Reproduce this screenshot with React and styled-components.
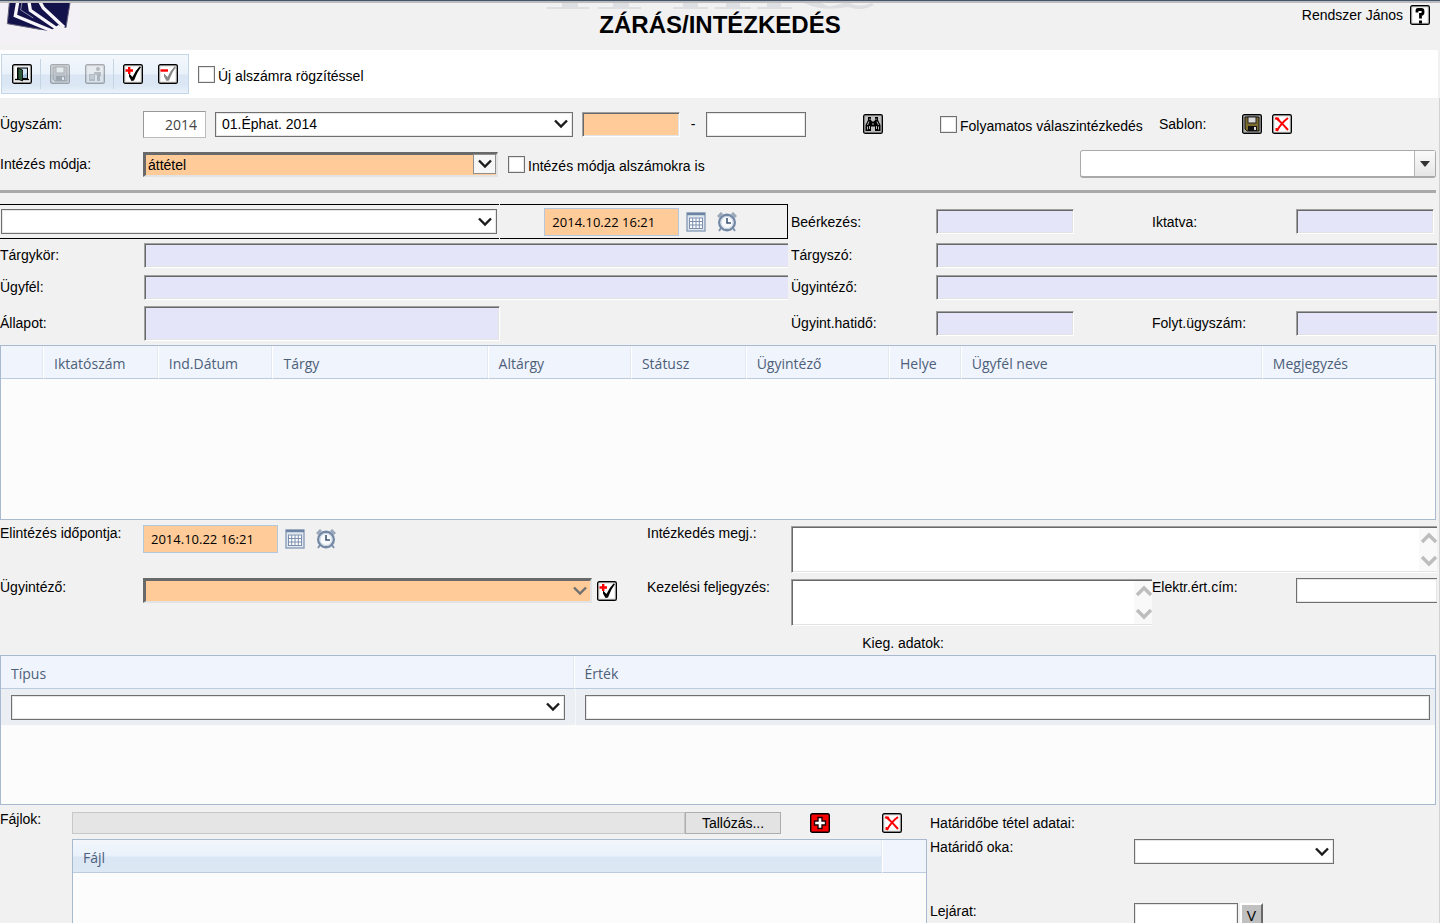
import React from "react";
import styled, { createGlobalStyle, css } from "styled-components";

const GlobalStyle = createGlobalStyle`
  *, *::before, *::after { box-sizing: border-box; }
  html, body { margin: 0; padding: 0; background: #f1f1f1; }
  body { overflow: hidden; }
  body, button, input, select, textarea {
    font-family: "Liberation Sans", Arial, sans-serif;
    font-size: 14px;
    line-height: 16px;
    color: #000;
  }
  button, input, select, textarea { margin: 0; border-radius: 0; outline: none; }
`;

/* ---------- page frame ---------- */

const Page = styled.div`
  height: 100vh;
  overflow: hidden;
  display: flex;
  flex-direction: column;
  border-top: 1px solid #44546b;
  background: #f1f1f1;
`;

const Header = styled.header`
  flex: none;
  height: 49px;
  border-top: 2px solid #bcbcbf;
  display: grid;
  grid-template-columns: 1fr auto 1fr;
  background: #f1f1f1;
`;

const LogoBox = styled.div`
  width: 80px;
  height: 41px;
  background: #f3f1f5;
`;

const TitleBlock = styled.div`
  display: flex;
  flex-direction: column;
  align-items: center;
`;

const Title = styled.h1`
  margin: 2px 0 0;
  font-size: 24px;
  line-height: 28px;
  font-weight: bold;
`;

const UserBox = styled.div`
  display: flex;
  justify-content: flex-end;
  align-items: flex-start;
  gap: 7px;
  padding: 2px 10px 0 0;
  line-height: 20px;
`;

const Toolbar = styled.div`
  flex: none;
  height: 48px;
  margin-right: 2px;
  padding: 4px 1px;
  background: #fff;
  display: flex;
  align-items: center;
  gap: 9px;
`;

const ToolGroup = styled.div`
  height: 40px;
  padding: 0 10px;
  border: 1px solid #c3d5e8;
  background: linear-gradient(#f4f8fc 0, #e9f1fa 19px, #dae6f4 20px, #dbe7f4 30px, #eaf2fa 100%);
  display: flex;
  align-items: center;
  gap: 15px;
`;

const ToolPart = styled.div`
  display: flex;
  align-items: center;
  gap: 15px;
  & + & {
    border-left: 1px solid #c6d5e4;
    padding: 5px 0 5px 9px;
    margin-left: -7px;
  }
`;

const Main = styled.main`
  flex: 1;
  min-height: 0;
  overflow: hidden;
  padding-right: 2px;
  border-right: 1px solid #d2d2d4;
`;

/* ---------- controls ---------- */

const IconButton = styled.button`
  flex: none;
  width: 20px;
  height: 20px;
  padding: 0;
  border: 0;
  background: none;
  display: block;
  opacity: ${(p) => (p.disabled ? 0.3 : 1)};
  filter: ${(p) => (p.disabled ? "grayscale(1)" : "none")};
  svg { display: block; }
`;

const sunken = css`
  border: 1px solid;
  border-color: #a0a0a0 #fff #fff #a0a0a0;
  box-shadow: inset 1px 1px 0 #696969, inset -1px -1px 0 #e3e3e3;
`;

const clippedEdge = css`
  border-right: 0;
  box-shadow: inset 1px 1px 0 #696969, inset 0 -1px 0 #e3e3e3;
`;

const flat = css`
  border: 1px solid #707070;
  box-shadow: inset 0 0 0 1px #e6e6e6;
`;

const Field = styled.input`
  min-width: 0;
  width: ${(p) => (p.$w ? `${p.$w}px` : "100%")};
  height: ${(p) => p.$h || 25}px;
  padding: 0 8px;
  background: ${(p) => p.$bg || "#fff"};
  ${(p) => (p.$sunken ? sunken : flat)}
  ${(p) => p.$cut && (p.$sunken ? clippedEdge : "border-right: 0;")}
`;

const YearField = styled(Field)`
  font-family: "Open Sans", "Noto Sans", sans-serif;
  color: #444;
  text-align: right;
  border-color: #999 #bbb #bbb #999;
  box-shadow: none;
`;

const DateField = styled.input`
  width: 135px;
  height: 28px;
  padding: 0 7px;
  border: 1px solid #b5c7de;
  background: #ffcb98;
  font-family: "Open Sans", "Noto Sans", sans-serif;
  font-size: 13px;
`;

const Check = styled.input`
  appearance: none;
  flex: none;
  width: 17px;
  height: 17px;
  background: #fff;
  ${flat}
`;

const CheckLabel = styled.label`
  display: flex;
  align-items: center;
  gap: 3px;
  white-space: nowrap;
`;

const CheckText = styled.span`
  padding-top: 4px;
`;

const SelectShell = styled.span`
  display: grid;
  align-items: center;
  min-width: 0;
  width: ${(p) => (p.$w ? `${p.$w}px` : "auto")};
  flex: ${(p) => (p.$grow ? "1" : "none")};
  > * { grid-area: 1 / 1; }
  > svg { justify-self: end; margin-right: 4px; pointer-events: none; }
`;

const SelectBox = styled.select`
  appearance: none;
  width: 100%;
  min-width: 0;
  height: 25px;
  padding: 0 6px;
  background: #fff;
  ${flat}
  ${(p) =>
    p.$orange &&
    css`
      padding: 0 2px;
      background: #ffcb98;
      border: 3px solid;
      border-width: 3px 2px 2px 3px;
      border-color: #696969 #e3e3e3 #e3e3e3 #696969;
      box-shadow: none;
    `}
`;

const ArrowBox = styled.span`
  justify-self: end;
  width: 23px;
  height: 20px;
  margin-right: 2px;
  border: 1px solid #8f8f8f;
  background: #f6f6f6;
  display: grid;
  place-items: center;
  pointer-events: none;
`;

const ComboShell = styled(SelectShell)`
  select {
    height: 28px;
    border: 1px solid #aaa;
    border-bottom-width: 2px;
    border-radius: 3px;
    box-shadow: none;
  }
`;

const ComboArrow = styled.span`
  justify-self: end;
  width: 21px;
  height: 25px;
  margin: 0 1px 1px 0;
  border-left: 1px solid #b5b5b5;
  background: linear-gradient(#fafafa, #e6e6e6);
  display: grid;
  place-items: center;
  pointer-events: none;
`;

const NoteShell = styled.span`
  flex: 1;
  min-width: 0;
  display: grid;
  margin: 1px 0 0 -1px;
  > * { grid-area: 1 / 1; }
`;

const Note = styled.textarea`
  width: 100%;
  height: 47px;
  resize: none;
  overflow: hidden;
  background: #fff;
  ${sunken}
  ${clippedEdge}
`;

const NoteScroll = styled.span`
  justify-self: end;
  width: 18px;
  height: 43px;
  margin: 2px 0;
  padding: 4px 0;
  overflow: hidden;
  background: #f9f9f9;
  display: flex;
  flex-direction: column;
  justify-content: space-between;
  align-items: center;
`;

/* ---------- form rows ---------- */

const Label = styled.label`
  white-space: nowrap;
`;

const FilterRow = styled.div`
  height: 40px;
  display: grid;
  align-items: center;
  grid-template-columns: ${(p) => p.$cols};
`;

const Filters = styled.section`
  padding-top: 6px;
  border-bottom: 3px solid #aaa;
  margin-right: 1px;
  height: 95px;
`;

const Inline = styled.div`
  display: flex;
  align-items: center;
  gap: ${(p) => p.$gap || 9}px;
  padding-right: ${(p) => p.$pr || 0}px;
  min-width: 0;
`;

const Dash = styled.span`
  width: 8px;
  text-align: center;
`;

const Details = styled.section`
  margin-top: 11px;
  padding-bottom: 2px;
`;

const DetailRow = styled.div`
  height: ${(p) => p.$h || 32}px;
  display: grid;
  align-items: center;
  grid-template-columns: 144fr 647fr 145fr 216fr 144fr 141fr;
`;

const Wide = styled.div`
  grid-column: span ${(p) => p.$span};
  min-width: 0;
  display: flex;
  padding-right: ${(p) => p.$pr || 0}px;
`;

const StatusField = styled(Field)`
  width: 55%;
`;

const BlackBox = styled.div`
  grid-column: span 2;
  height: 35px;
  margin-right: 3px;
  display: grid;
  grid-template-columns: 500fr 288fr;
  gap: 1px;
`;

const BlackCell = styled.div`
  border: 1px solid #000;
  border-width: ${(p) => (p.$last ? "1px 1px 1px 0" : "1px 0")};
  padding: ${(p) => (p.$last ? "0 0 0 44px" : "0 2px 0 1px")};
  display: flex;
  align-items: center;
  gap: ${(p) => (p.$last ? 7 : 0)}px;
`;

const PickerIcons = styled.span`
  display: flex;
  align-items: center;
  gap: 11px;
`;

const ActionRow = styled.div`
  height: ${(p) => p.$h}px;
  padding-top: ${(p) => p.$pt || 0}px;
  display: grid;
  align-items: start;
  grid-template-columns: 143fr 504fr 145fr 360fr 144fr 141fr;
  > label { padding-top: ${(p) => p.$lp || 0}px; }
`;

const Caption = styled.div`
  padding-left: 60%;
  line-height: 20px;
  height: 22px;
`;

/* ---------- data grids ---------- */

const GridFrame = styled.div`
  height: ${(p) => p.$h}px;
  margin-right: ${(p) => (p.$flush ? 0 : 1)}px;
  border: 1px solid #a9bad0;
  background: #fcfcfc;
`;

const GridTable = styled.table`
  width: 100%;
  border-collapse: separate;
  border-spacing: 0;
  table-layout: fixed;
`;

const Th = styled.th`
  height: 33px;
  padding: 3px 10px 0;
  width: ${(p) => p.$w || "auto"};
  text-align: left;
  font-family: "Open Sans", "Noto Sans", sans-serif;
  font-weight: normal;
  color: #4c607a;
  white-space: nowrap;
  background: ${(p) =>
    p.$active
      ? "linear-gradient(#f3f7fc 0, #e9f1fb 16px, #dbe6f4 17px, #dde8f5 100%)"
      : "#f0f4fc"};
  border-bottom: 1px solid #bccbde;
  border-right: 1px solid #fff;
  box-shadow: inset -1px 0 0 #e3e9f2;
  &:last-child { border-right: 0; box-shadow: none; }
`;

const Td = styled.td`
  height: 36px;
  padding: ${(p) => (p.$last ? "0 5px 0 9px" : "0 10px")};
  background: #ebeef3;
  & + & { border-left: 1px solid #f6f8fa; }
`;

/* ---------- files and deadlines ---------- */

const Bottom = styled.section`
  display: grid;
  grid-template-columns: 72fr 855fr 510fr;
`;

const FileLabel = styled.label`
  padding-top: 6px;
`;

const FileRow = styled.div`
  height: 34px;
  padding: 2px 25px 0 0;
  display: flex;
  align-items: center;
`;

const PathField = styled.input`
  flex: 1;
  min-width: 0;
  height: 22px;
  border: 1px solid #c8c8c8;
  background: #e5e5e5;
`;

const Browse = styled.button`
  width: 96px;
  height: 22px;
  border: 1px solid #adadad;
  background: #e3e3e3;
  padding: 0;
`;

const FileActions = styled.span`
  margin-left: 29px;
  display: flex;
  gap: 52px;
`;

const Deadline = styled.div`
  padding: 10px 0 0 3px;
  display: grid;
  grid-template-columns: 204fr 303fr;
  grid-template-rows: 24px 64px 25px;
  align-items: start;
`;

const DeadlineTitle = styled.div`
  grid-column: span 2;
`;

const Raised = styled.button`
  width: 23px;
  height: 25px;
  padding: 0;
  border: 2px solid;
  border-color: #fff #696969 #696969 #fff;
  background: #c0c0c0;
`;

/* ---------- drawings ---------- */

const Svg = ({ children }) => (
  <svg width="20" height="20" viewBox="0 0 20 20" aria-hidden="true">
    {children}
  </svg>
);

const Tile = ({ fill = "#fff" }) => (
  <>
    <rect x="0.7" y="0.7" width="18.6" height="18.6" rx="1.6" fill={fill} stroke="#000" strokeWidth="1.4" />
    <rect x="1.9" y="1.9" width="16.200" height="16.200" fill="none" stroke="#999" strokeWidth="1" opacity=".5" />
  </>
);

const Chevron = ({ color = "#1c1c1c" }) => (
  <svg width="16" height="12" viewBox="0 0 16 12" aria-hidden="true">
    <path d="M2 2.500 L8 8.500 L14 2.500" fill="none" stroke={color} strokeWidth="2.4" />
  </svg>
);

const ScrollArrow = ({ up }) => (
  <svg width="18" height="12" viewBox="0 0 18 12" aria-hidden="true">
    <path d={up ? "M3 10 L10 3 L17 10" : "M3 2 L10 9 L17 2"} fill="none" stroke="#bdbdbd" strokeWidth="3.4" />
  </svg>
);

const Logo = () => (
  <svg width="80" height="41" viewBox="0 9 240 123" aria-hidden="true">
    <path d="M28 9 L210 9 L198 83 L178 78 L150 94 L22 71 Z" fill="#14124a" />
    <path d="M28 9 L22 71 L125 89" fill="none" stroke="#66647e" strokeWidth="3" />
    <path d="M210 9 L198 83" fill="none" stroke="#66647e" strokeWidth="3" />
    <path d="M53 6 L46 47 L156 93 M87 6 L91 31 L172 87 M120 6 L130 24 L192 82" fill="none" stroke="#f8f6fa" strokeWidth="10" />
    <path d="M66 6 L62 30 L100 54" fill="none" stroke="#c9c7d6" strokeWidth="2" />
    <path d="M150 94 L176 74 L186 82 L168 96 Z" fill="#f3f1f5" />
  </svg>
);

const Banner = () => (
  <svg width="350" height="6" viewBox="0 0 350 6" aria-hidden="true">
    <g fill="#dddfe2">
      <path d="M2 4h42v2H2zM17 0h16v5H17zM53 4h43v2H53zM68 0h16v5H68zM128 4h35v2h-35zM138 0h15v5h-15zM170 4h36v2h-36zM181 0h14v5h-14zM212 4h35v2h-35zM222 0h14v5h-14z" />
      <path d="M259 0h18q5 5 15 2l6-2h7q8 5 22 0l2 2q-12 7-26 2-26 5-44-4z" />
    </g>
  </svg>
);

const HelpIcon = () => (
  <Svg>
    <Tile />
    <path d="M7 7.500 V5 Q7 4.500 8 4.500 H11.500 Q13 4.500 13 6 V7.500 Q13 9.500 10.500 9.500 V13.500" fill="none" stroke="#000" strokeWidth="2.800" />
    <rect x="9" y="15.500" width="3" height="3" fill="#000" />
  </Svg>
);

const DoorIcon = () => (
  <Svg>
    <Tile />
    <path d="M3 15.500 H17" stroke="#000" strokeWidth="1.400" />
    <rect x="5.500" y="4" width="10" height="10.500" fill="#9fbfdb" stroke="#000" />
    <path d="M10 5 H15 V9 L10 12 Z" fill="#d3e5f2" />
    <path d="M6 4 L10.500 6 V17 L6 15 Z" fill="#2f5a3c" stroke="#000" strokeWidth=".8" />
  </Svg>
);

const DiskIcon = () => (
  <Svg>
    <Tile fill="#b4b4b4" />
    <path d="M3 3 H17 V17 H5 L3 15 Z" fill="#7d6d2c" stroke="#111" />
    <rect x="6" y="3" width="8" height="6" fill="#d8d8d8" stroke="#222" strokeWidth="1" />
    <rect x="6" y="12" width="9" height="5" fill="#111" />
    <rect x="12" y="13" width="2" height="3" fill="#ddd" />
  </Svg>
);

const PersonIcon = () => (
  <Svg>
    <Tile fill="#ddd" />
    <rect x="4" y="10" width="6" height="7" fill="#555" />
    <path d="M5 12h4M5 14h4" stroke="#ccc" />
    <circle cx="13" cy="5" r="2" fill="#333" />
    <path d="M9 8 H16 V12 H15 V17 H12 V11 L9 10 Z" fill="#444" />
  </Svg>
);

const CheckIcon = ({ minus }) => (
  <Svg>
    <Tile />
    <path
      d="M6 9.500 L9.500 13 Q12 7 16.500 2.500 L18 3 Q13.500 9 11 16.500 L8.500 17 L6 12.500 Z"
      fill={minus ? "#8a8a8a" : "#000"}
    />
    <path d={minus ? "M2.500 6.500 H10" : "M2.500 6.500 H10 M6.200 3 V10"} stroke="#f00" strokeWidth="2.4" />
  </Svg>
);

const BinocularsIcon = () => (
  <Svg>
    <Tile fill="#c2c2c2" />
    <path d="M5 3h3v3l1 1.500h2l1-1.500V3h3v3l2.500 5v6h-5.500v-4.500h-4V17H2.500v-6l2.500-5z" fill="#000" />
    <path d="M6 7.500l-1.500 3.500M14 7.500l1.500 3.500M4.500 12.500v3M6.500 12v3M13.500 12v3M15.500 12.500v3M7 4.500v1.500M13 4.500v1.500M10 9v2" stroke="#c8c8c8" strokeWidth=".9" />
  </Svg>
);

const CrossIcon = () => (
  <Svg>
    <Tile />
    <path d="M4 4 Q9 8 16 16 M16 4 Q9 9 5 17" fill="none" stroke="#f00" strokeWidth="2" />
    <path d="M3 4.500 L6 4.500 L7 7 M4.500 14 L4.500 17" stroke="#f00" strokeWidth="2" fill="none" />
  </Svg>
);

const AddIcon = () => (
  <Svg>
    <rect x="0.7" y="0.7" width="18.6" height="18.6" rx="1.6" fill="#fb0000" stroke="#000" strokeWidth="1.4" />
    <path d="M8 4.500h4v3.500h3.500v4H12v3.500H8V12H4.500V8H8z" fill="#fff" stroke="#200" strokeWidth="1.4" />
  </Svg>
);

const CalendarIcon = () => (
  <Svg>
    <rect x="1" y="1" width="18" height="18" fill="#dfe7f0" stroke="#8a9db8" strokeWidth="1.4" />
    <path d="M1 2 H19" stroke="#6e84a5" strokeWidth="2.4" />
    <rect x="3.500" y="5.500" width="13" height="11" fill="#fff" />
    <path d="M3 6h14M3 9.500h14M3 13h14M3 16.500h14M3.500 6v11M6.700 6v11M10 6v11M13.300 6v11M16.500 6v11" stroke="#7c90ad" strokeWidth="1" />
  </Svg>
);

const ClockIcon = () => (
  <Svg>
    <path d="M1 5 L5 1 M15 1 L19 5" stroke="#9aa8b9" strokeWidth="3" />
    <path d="M4 16 L2 19 M16 16 L18 19" stroke="#8093ae" strokeWidth="2" />
    <circle cx="10" cy="10.500" r="7.800" fill="#f8fafc" stroke="#7388a5" strokeWidth="2.400" />
    <circle cx="10" cy="10.500" r="6" fill="none" stroke="#c6d2e0" strokeWidth="1" />
    <path d="M10 6 V11 H14" fill="none" stroke="#3f5676" strokeWidth="1.600" />
  </Svg>
);

/* ---------- composed parts ---------- */

const ORANGE = "#ffcb98";
const LILAC = "#e5e5fa";

function Select({ id, label, value, width, grow, orange, chevron, arrowBox }) {
  return (
    <SelectShell $w={width} $grow={grow}>
      <SelectBox id={id} aria-label={label} $orange={orange} defaultValue={value || ""}>
        <option>{value || ""}</option>
      </SelectBox>
      {arrowBox ? (
        <ArrowBox>
          <Chevron />
        </ArrowBox>
      ) : (
        <Chevron color={chevron} />
      )}
    </SelectShell>
  );
}

function DateTime({ id, label }) {
  return (
    <>
      <DateField id={id} aria-label={label} defaultValue="2014.10.22 16:21" />
      <PickerIcons>
        <IconButton aria-label="Naptár"><CalendarIcon /></IconButton>
        <IconButton aria-label="Időpont"><ClockIcon /></IconButton>
      </PickerIcons>
    </>
  );
}

function NoteField({ id }) {
  return (
    <NoteShell>
      <Note id={id} />
      <NoteScroll>
        <ScrollArrow up />
        <ScrollArrow />
      </NoteScroll>
    </NoteShell>
  );
}

const ReadOnly = (props) => <Field readOnly $sunken $bg={LILAC} {...props} />;

const CASE_COLUMNS = [
  ["", "3%"],
  ["Iktatószám", "8%"],
  ["Ind.Dátum", "8%"],
  ["Tárgy", "15%"],
  ["Altárgy", "10%"],
  ["Státusz", "8%"],
  ["Ügyintéző", "10%"],
  ["Helye", "5%"],
  ["Ügyfél neve", "21%"],
  ["Megjegyzés", "12%"],
];

export default function App() {
  return (
    <Page>
      <GlobalStyle />
      <Header>
        <LogoBox><Logo /></LogoBox>
        <TitleBlock>
          <Banner />
          <Title>ZÁRÁS/INTÉZKEDÉS</Title>
        </TitleBlock>
        <UserBox>
          <span>Rendszer János</span>
          <IconButton aria-label="Súgó"><HelpIcon /></IconButton>
        </UserBox>
      </Header>

      <Toolbar>
        <ToolGroup>
          <ToolPart>
            <IconButton aria-label="Kilépés"><DoorIcon /></IconButton>
          </ToolPart>
          <ToolPart>
            <IconButton aria-label="Mentés" disabled><DiskIcon /></IconButton>
            <IconButton aria-label="Törlés" disabled><PersonIcon /></IconButton>
          </ToolPart>
          <ToolPart>
            <IconButton aria-label="Hozzáadás"><CheckIcon /></IconButton>
            <IconButton aria-label="Elvétel"><CheckIcon minus /></IconButton>
          </ToolPart>
        </ToolGroup>
        <CheckLabel>
          <Check type="checkbox" />
          <CheckText>Új alszámra rögzítéssel</CheckText>
        </CheckLabel>
      </Toolbar>

      <Main>
        <Filters>
          <FilterRow $cols="143fr 720fr 77fr 219fr 83fr 194fr">
            <Label htmlFor="ugyszam">Ügyszám:</Label>
            <Inline $pr={57}>
              <YearField id="ugyszam" $w={63} $h={27} defaultValue="2014" />
              <Select label="Iktatókönyv" value="01.Éphat. 2014" grow />
              <Field aria-label="Főszám" $w={98} $bg={ORANGE} $sunken />
              <Dash>-</Dash>
              <Field aria-label="Alszám" $w={100} />
            </Inline>
            <IconButton aria-label="Keresés"><BinocularsIcon /></IconButton>
            <CheckLabel>
              <Check type="checkbox" />
              <CheckText>Folyamatos válaszintézkedés</CheckText>
            </CheckLabel>
            <Label htmlFor="sablon">Sablon:</Label>
            <Inline $gap={10}>
              <IconButton aria-label="Sablon mentése"><DiskIcon /></IconButton>
              <IconButton aria-label="Sablon törlése"><CrossIcon /></IconButton>
            </Inline>
          </FilterRow>
          <FilterRow $cols="143fr 355fr 10fr 572fr 356fr">
            <Label htmlFor="mod">Intézés módja:</Label>
            <Select id="mod" value="áttétel" orange arrowBox />
            <span />
            <CheckLabel>
              <Check type="checkbox" />
              <CheckText>Intézés módja alszámokra is</CheckText>
            </CheckLabel>
            <ComboShell>
              <SelectBox id="sablon" defaultValue="">
                <option />
              </SelectBox>
              <ComboArrow>
                <svg width="10" height="6" viewBox="0 0 10 6" aria-hidden="true">
                  <path d="M0 0h10L5 6z" fill="#333" />
                </svg>
              </ComboArrow>
            </ComboShell>
          </FilterRow>
        </Filters>

        <Details>
          <DetailRow $h={35}>
            <BlackBox>
              <BlackCell>
                <Select label="Előzmény" grow />
              </BlackCell>
              <BlackCell $last>
                <DateTime label="Időpont" />
              </BlackCell>
            </BlackBox>
            <Label htmlFor="beerkezes">Beérkezés:</Label>
            <ReadOnly id="beerkezes" $w={138} />
            <Label htmlFor="iktatva">Iktatva:</Label>
            <ReadOnly id="iktatva" $w={138} />
          </DetailRow>
          <DetailRow>
            <Label htmlFor="targykor">Tárgykör:</Label>
            <Wide $span={1} $pr={3}><ReadOnly id="targykor" $cut /></Wide>
            <Label htmlFor="targyszo">Tárgyszó:</Label>
            <Wide $span={3}><ReadOnly id="targyszo" $cut /></Wide>
          </DetailRow>
          <DetailRow>
            <Label htmlFor="ugyfel">Ügyfél:</Label>
            <Wide $span={1} $pr={3}><ReadOnly id="ugyfel" $cut /></Wide>
            <Label htmlFor="ugyintezo">Ügyintéző:</Label>
            <Wide $span={3}><ReadOnly id="ugyintezo" $cut /></Wide>
          </DetailRow>
          <DetailRow $h={40}>
            <Label htmlFor="allapot">Állapot:</Label>
            <StatusField id="allapot" readOnly $sunken $bg={LILAC} $h={35} />
            <Label htmlFor="hatarido">Ügyint.hatidő:</Label>
            <ReadOnly id="hatarido" $w={138} />
            <Label htmlFor="folyt">Folyt.ügyszám:</Label>
            <ReadOnly id="folyt" $cut />
          </DetailRow>
        </Details>

        <GridFrame $h={175}>
          <GridTable>
            <thead>
              <tr>
                {CASE_COLUMNS.map(([name, w]) => (
                  <Th key={name} $w={w}>{name}</Th>
                ))}
              </tr>
            </thead>
          </GridTable>
        </GridFrame>

        <ActionRow $h={58} $pt={5}>
          <Label htmlFor="elintezes">Elintézés időpontja:</Label>
          <Inline $gap={7}>
            <DateTime id="elintezes" />
          </Inline>
          <Label htmlFor="megj">Intézkedés megj.:</Label>
          <Wide $span={3}>
            <NoteField id="megj" />
          </Wide>
        </ActionRow>
        <ActionRow $h={55} $lp={1}>
          <Label htmlFor="ugyint2">Ügyintéző:</Label>
          <Inline $gap={5} $pr={30}>
            <Select id="ugyint2" orange chevron="#707070" grow />
            <IconButton aria-label="Ügyintéző hozzáadása"><CheckIcon /></IconButton>
          </Inline>
          <Label htmlFor="kezelesi">Kezelési feljegyzés:</Label>
          <NoteField id="kezelesi" />
          <Label htmlFor="cim">Elektr.ért.cím:</Label>
          <Field id="cim" $cut />
        </ActionRow>
        <Caption>Kieg. adatok:</Caption>

        <GridFrame $h={150}>
          <GridTable>
            <thead>
              <tr>
                <Th $w="40%">Típus</Th>
                <Th>Érték</Th>
              </tr>
            </thead>
            <tbody>
              <tr>
                <Td><Select label="Típus" /></Td>
                <Td $last><Field aria-label="Érték" /></Td>
              </tr>
            </tbody>
          </GridTable>
        </GridFrame>

        <Bottom>
          <FileLabel htmlFor="fajl">Fájlok:</FileLabel>
          <div>
            <FileRow>
              <PathField id="fajl" readOnly />
              <Browse>Tallózás...</Browse>
              <FileActions>
                <IconButton aria-label="Fájl hozzáadása"><AddIcon /></IconButton>
                <IconButton aria-label="Fájl törlése"><CrossIcon /></IconButton>
              </FileActions>
            </FileRow>
            <GridFrame $h={150} $flush>
              <GridTable>
                <thead>
                  <tr>
                    <Th $active $w="95%">Fájl</Th>
                    <Th />
                  </tr>
                </thead>
              </GridTable>
            </GridFrame>
          </div>
          <Deadline>
            <DeadlineTitle>Határidőbe tétel adatai:</DeadlineTitle>
            <Label htmlFor="oka">Határidő oka:</Label>
            <Select id="oka" width={200} />
            <Label htmlFor="lejarat">Lejárat:</Label>
            <Inline $gap={2}>
              <Field id="lejarat" $w={104} />
              <Raised>V</Raised>
            </Inline>
          </Deadline>
        </Bottom>
      </Main>
    </Page>
  );
}
